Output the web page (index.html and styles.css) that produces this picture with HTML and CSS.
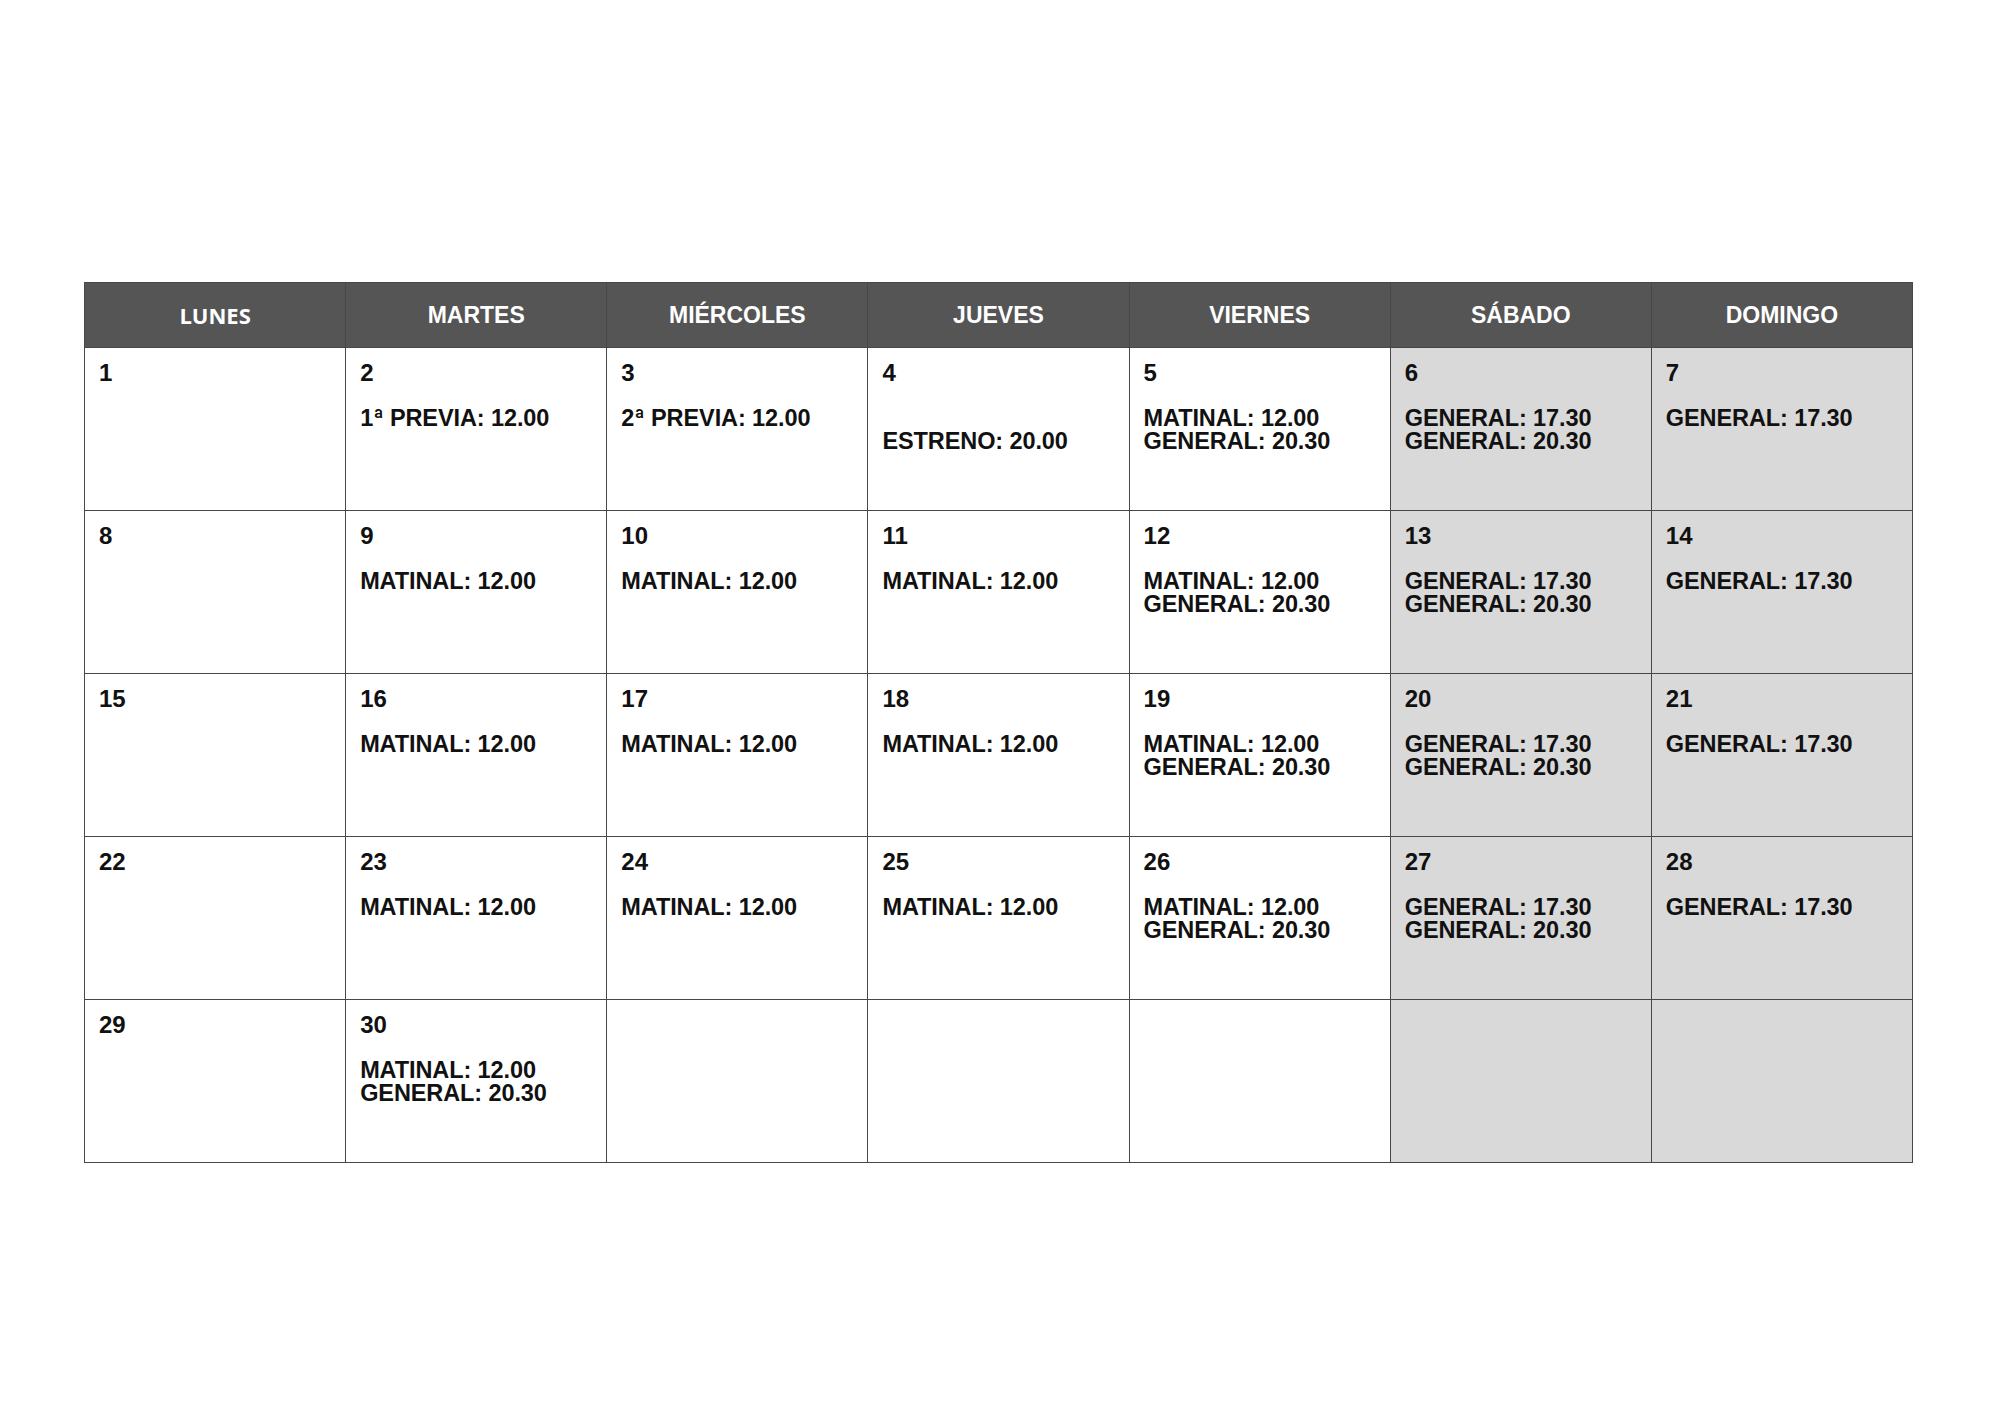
FILE: index.html
```html
<!DOCTYPE html>
<html lang="es">
<head>
<meta charset="utf-8">
<title>Calendario</title>
<link rel="stylesheet" href="styles.css">
</head>
<body>
<div class="cal">
  <div class="hd hd-first">LUNES</div>
  <div class="hd">MARTES</div>
  <div class="hd">MIÉRCOLES</div>
  <div class="hd">JUEVES</div>
  <div class="hd">VIERNES</div>
  <div class="hd">SÁBADO</div>
  <div class="hd">DOMINGO</div>

  <div class="cell"><div class="day">1</div></div>
  <div class="cell"><div class="day">2</div><div class="ev">1<span class="ord">ª</span> PREVIA: 12.00</div></div>
  <div class="cell"><div class="day">3</div><div class="ev">2<span class="ord">ª</span> PREVIA: 12.00</div></div>
  <div class="cell"><div class="day">4</div><div class="ev"><br>ESTRENO: 20.00</div></div>
  <div class="cell"><div class="day">5</div><div class="ev">MATINAL: 12.00<br>GENERAL: 20.30</div></div>
  <div class="cell we"><div class="day">6</div><div class="ev">GENERAL: 17.30<br>GENERAL: 20.30</div></div>
  <div class="cell we"><div class="day">7</div><div class="ev">GENERAL: 17.30</div></div>

  <div class="cell"><div class="day">8</div></div>
  <div class="cell"><div class="day">9</div><div class="ev">MATINAL: 12.00</div></div>
  <div class="cell"><div class="day">10</div><div class="ev">MATINAL: 12.00</div></div>
  <div class="cell"><div class="day">11</div><div class="ev">MATINAL: 12.00</div></div>
  <div class="cell"><div class="day">12</div><div class="ev">MATINAL: 12.00<br>GENERAL: 20.30</div></div>
  <div class="cell we"><div class="day">13</div><div class="ev">GENERAL: 17.30<br>GENERAL: 20.30</div></div>
  <div class="cell we"><div class="day">14</div><div class="ev">GENERAL: 17.30</div></div>

  <div class="cell"><div class="day">15</div></div>
  <div class="cell"><div class="day">16</div><div class="ev">MATINAL: 12.00</div></div>
  <div class="cell"><div class="day">17</div><div class="ev">MATINAL: 12.00</div></div>
  <div class="cell"><div class="day">18</div><div class="ev">MATINAL: 12.00</div></div>
  <div class="cell"><div class="day">19</div><div class="ev">MATINAL: 12.00<br>GENERAL: 20.30</div></div>
  <div class="cell we"><div class="day">20</div><div class="ev">GENERAL: 17.30<br>GENERAL: 20.30</div></div>
  <div class="cell we"><div class="day">21</div><div class="ev">GENERAL: 17.30</div></div>

  <div class="cell"><div class="day">22</div></div>
  <div class="cell"><div class="day">23</div><div class="ev">MATINAL: 12.00</div></div>
  <div class="cell"><div class="day">24</div><div class="ev">MATINAL: 12.00</div></div>
  <div class="cell"><div class="day">25</div><div class="ev">MATINAL: 12.00</div></div>
  <div class="cell"><div class="day">26</div><div class="ev">MATINAL: 12.00<br>GENERAL: 20.30</div></div>
  <div class="cell we"><div class="day">27</div><div class="ev">GENERAL: 17.30<br>GENERAL: 20.30</div></div>
  <div class="cell we"><div class="day">28</div><div class="ev">GENERAL: 17.30</div></div>

  <div class="cell"><div class="day">29</div></div>
  <div class="cell"><div class="day">30</div><div class="ev">MATINAL: 12.00<br>GENERAL: 20.30</div></div>
  <div class="cell"></div>
  <div class="cell"></div>
  <div class="cell"></div>
  <div class="cell we"></div>
  <div class="cell we"></div>
</div>
</body>
</html>
```

FILE: styles.css
```css
html, body {
  margin: 0;
  padding: 0;
  background: #ffffff;
}

body {
  font-family: "Liberation Sans", Arial, sans-serif;
  color: #111111;
}

.cal {
  margin: 282px 0 0 84px;
  width: 1829px;
  box-sizing: border-box;
  display: grid;
  grid-template-columns: repeat(7, 1fr);
  grid-template-rows: 64px repeat(5, 162px);
  gap: 1px;
  padding: 1px;
  background: #474747;
}

.hd {
  background: #555555;
  color: #ffffff;
  font-weight: bold;
  font-size: 23px;
  display: flex;
  align-items: center;
  justify-content: center;
  line-height: 1;
}

.hd-first {
  font-family: "Open Sans", sans-serif;
  font-size: 22px;
}

.cell {
  background: #ffffff;
  padding: 13px 14px 0 14px;
  box-sizing: border-box;
}

.cell.we {
  background: #d9d9d9;
}

.day {
  font-weight: bold;
  font-size: 24px;
  line-height: 24px;
}

.ev {
  margin-top: 22px;
  font-weight: bold;
  font-size: 23.5px;
  line-height: 23px;
  letter-spacing: -0.1px;
}

.ord {
  font-family: Roboto, "Liberation Sans", sans-serif;
  font-weight: bold;
}
```
